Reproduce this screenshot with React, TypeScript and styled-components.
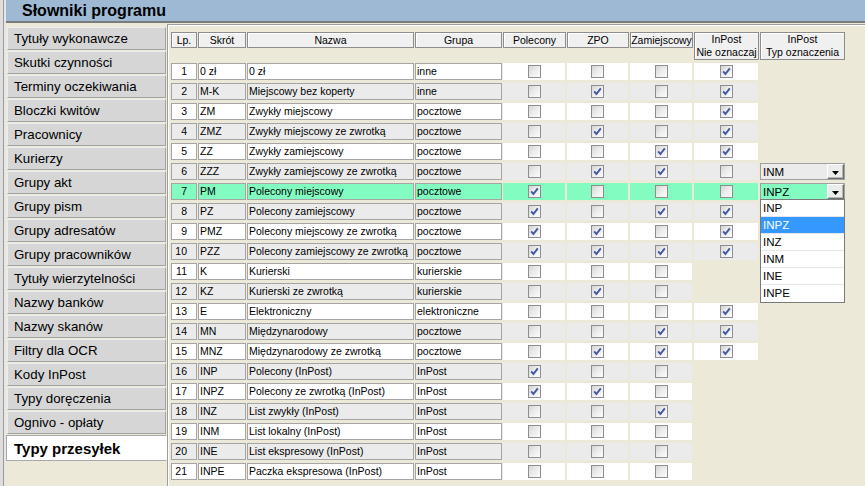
import React from 'react';
import styled, { createGlobalStyle } from 'styled-components';

const GlobalStyle = createGlobalStyle`
  html, body {
    margin: 0;
    padding: 0;
    background: #ece9d8;
  }

  body {
    font-family: "Liberation Sans", Arial, sans-serif;
  }
`;

type Tone = 'white' | 'gray' | 'green';

const toneBg: Record<Tone, string> = {
  white: '#ffffff',
  gray: '#ebebeb',
  green: '#82fcc0'
};

interface Row {
  lp: number;
  code: string;
  name: string;
  group: string;
  p: boolean;
  z: boolean;
  m: boolean;
  // undefined -> no "Nie oznaczaj" field in that row
  nie?: boolean;
  typ?: string;
  open?: boolean;
}

const ROWS: Row[] = [
  { lp: 1, code: '0 zł', name: '0 zł', group: 'inne', p: false, z: false, m: false, nie: true },
  { lp: 2, code: 'M-K', name: 'Miejscowy bez koperty', group: 'inne', p: false, z: true, m: false, nie: true },
  { lp: 3, code: 'ZM', name: 'Zwykły miejscowy', group: 'pocztowe', p: false, z: false, m: false, nie: true },
  { lp: 4, code: 'ZMZ', name: 'Zwykły miejscowy ze zwrotką', group: 'pocztowe', p: false, z: true, m: false, nie: true },
  { lp: 5, code: 'ZZ', name: 'Zwykły zamiejscowy', group: 'pocztowe', p: false, z: false, m: true, nie: true },
  { lp: 6, code: 'ZZZ', name: 'Zwykły zamiejscowy ze zwrotką', group: 'pocztowe', p: false, z: true, m: true, nie: false, typ: 'INM' },
  { lp: 7, code: 'PM', name: 'Polecony miejscowy', group: 'pocztowe', p: true, z: false, m: false, nie: false, typ: 'INPZ', open: true },
  { lp: 8, code: 'PZ', name: 'Polecony zamiejscowy', group: 'pocztowe', p: true, z: false, m: true, nie: true },
  { lp: 9, code: 'PMZ', name: 'Polecony miejscowy ze zwrotką', group: 'pocztowe', p: true, z: true, m: false, nie: true },
  { lp: 10, code: 'PZZ', name: 'Polecony zamiejscowy ze zwrotką', group: 'pocztowe', p: true, z: true, m: true, nie: true },
  { lp: 11, code: 'K', name: 'Kurierski', group: 'kurierskie', p: false, z: false, m: false },
  { lp: 12, code: 'KZ', name: 'Kurierski ze zwrotką', group: 'kurierskie', p: false, z: true, m: false },
  { lp: 13, code: 'E', name: 'Elektroniczny', group: 'elektroniczne', p: false, z: false, m: false, nie: true },
  { lp: 14, code: 'MN', name: 'Międzynarodowy', group: 'pocztowe', p: false, z: false, m: true, nie: true },
  { lp: 15, code: 'MNZ', name: 'Międzynarodowy ze zwrotką', group: 'pocztowe', p: false, z: true, m: true, nie: true },
  { lp: 16, code: 'INP', name: 'Polecony (InPost)', group: 'InPost', p: true, z: false, m: false },
  { lp: 17, code: 'INPZ', name: 'Polecony ze zwrotką (InPost)', group: 'InPost', p: true, z: true, m: false },
  { lp: 18, code: 'INZ', name: 'List zwykły (InPost)', group: 'InPost', p: false, z: false, m: true },
  { lp: 19, code: 'INM', name: 'List lokalny (InPost)', group: 'InPost', p: false, z: false, m: false },
  { lp: 20, code: 'INE', name: 'List ekspresowy (InPost)', group: 'InPost', p: false, z: false, m: false },
  { lp: 21, code: 'INPE', name: 'Paczka ekspresowa (InPost)', group: 'InPost', p: false, z: false, m: false }
];

const MENU = [
  'Tytuły wykonawcze',
  'Skutki czynności',
  'Terminy oczekiwania',
  'Bloczki kwitów',
  'Pracownicy',
  'Kurierzy',
  'Grupy akt',
  'Grupy pism',
  'Grupy adresatów',
  'Grupy pracowników',
  'Tytuły wierzytelności',
  'Nazwy banków',
  'Nazwy skanów',
  'Filtry dla OCR',
  'Kody InPost',
  'Typy doręczenia',
  'Ognivo - opłaty',
  'Typy przesyłek'
];

const TYP_OPTIONS = ['INP', 'INPZ', 'INZ', 'INM', 'INE', 'INPE'];

const Window = styled.div`
  display: flex;
  width: 865px;
  height: 486px;
  overflow: hidden;
  background: #ece9d8;
`;

const EdgeStrip = styled.div`
  flex: none;
  width: 6px;
  background: linear-gradient(to right, #dedede 0 3px, #9c9c9c 3px 4px, #e6e6e6 4px);
`;

const Main = styled.div`
  flex: 1;
  display: flex;
  flex-direction: column;
  min-width: 0;
`;

const TitleBar = styled.div`
  flex: none;
  height: 21px;
  display: flex;
  align-items: center;
  padding-left: 16px;
  background: #9db9d4;
  border-bottom: 2px solid #7b7b7b;
  color: #000;
  font: bold 16px "Liberation Sans", Arial, sans-serif;
`;

const Body = styled.div`
  flex: 1;
  display: flex;
  min-height: 0;
`;

const Sidebar = styled.nav`
  flex: none;
  width: 161px;
  display: flex;
  flex-direction: column;
  gap: 1px;
  padding-top: 4px;
`;

const NavButton = styled.div<{ $active?: boolean }>`
  box-sizing: border-box;
  height: ${(p) => (p.$active ? '26px' : '23px')};
  margin: 0 ${(p) => (p.$active ? '0' : '1px')};
  padding-left: ${(p) => (p.$active ? '7px' : '6px')};
  display: flex;
  align-items: center;
  background: ${(p) => (p.$active ? '#ffffff' : '#d6d6d6')};
  border: 1px solid;
  border-color: ${(p) => (p.$active ? '#a8a8a8 transparent #a8a8a8 #a8a8a8' : '#ededed #a3a3a3 #a3a3a3 #ededed')};
  color: #000;
  font-size: ${(p) => (p.$active ? '15px' : '13.3px')};
  font-weight: ${(p) => (p.$active ? 'bold' : 'normal')};
  white-space: nowrap;
`;

const Content = styled.section`
  flex: 1;
  position: relative;
  margin-top: 1px;
  padding: 7px 0 0 3px;
  border-top: 1px solid #9d9d9d;
  border-left: 1px solid #9d9d9d;
  box-shadow: inset 1px 1px 0 #ffffff;
`;

const Grid = styled.div`
  display: grid;
  grid-template-columns: 27px 49px 168px 88px 64px 63px 64px 66px 86px;
  grid-template-rows: 28px;
  grid-auto-rows: 17px;
  row-gap: 3px;
  font-size: 10.5px;
  color: #000;
`;

const HeaderCell = styled.div<{ $tall?: boolean }>`
  box-sizing: border-box;
  width: calc(100% - 1px);
  height: ${(p) => (p.$tall ? '28px' : '16px')};
  display: flex;
  flex-direction: column;
  align-items: center;
  justify-content: center;
  line-height: 13px;
  background: #f0f0f0;
  border: 1px solid #8d8d8d;
  box-shadow: inset 1px 1px 0 #ffffff;
  white-space: nowrap;
`;

const TextCell = styled.div<{ $tone: Tone; $num?: boolean }>`
  box-sizing: border-box;
  width: calc(100% - 1px);
  height: 17px;
  padding: ${(p) => (p.$num ? '0 9px 0 0' : '0 0 0 1px')};
  text-align: ${(p) => (p.$num ? 'right' : 'left')};
  line-height: 15px;
  background: ${(p) => toneBg[p.$tone]};
  border: 1px solid #a5a5a5;
  white-space: nowrap;
  overflow: hidden;
`;

const CheckCell = styled.div<{ $tone: Tone }>`
  width: calc(100% - 2px);
  height: 17px;
  display: flex;
  align-items: center;
  justify-content: center;
  background: ${(p) => toneBg[p.$tone]};
`;

const Box = styled.span`
  box-sizing: border-box;
  width: 13px;
  height: 13px;
  display: flex;
  align-items: center;
  justify-content: center;
  border: 1px solid #8e8e8e;
  background: linear-gradient(135deg, #d4d4d4 0%, #ebebeb 45%, #fbfbfb 100%);
`;

const Combo = styled.div<{ $tone: Tone }>`
  position: relative;
  box-sizing: border-box;
  width: calc(100% - 1px);
  height: 17px;
  display: flex;
  align-items: center;
  padding-left: 2px;
  background: ${(p) => toneBg[p.$tone]};
  border: 1px solid #a0a0a0;
  font-size: 11.5px;
`;

const ComboButton = styled.span`
  position: absolute;
  right: 0;
  top: 0;
  box-sizing: border-box;
  width: 17px;
  height: 15px;
  display: flex;
  align-items: center;
  justify-content: center;
  padding-top: 2px;
  background: #ececec;
  border: 1px solid;
  border-color: #ffffff #6e6e6e #6e6e6e #ffffff;
  box-shadow: inset -1px -1px 0 #b5b5b5;
`;

const DropList = styled.ul`
  position: absolute;
  left: -1px;
  top: 100%;
  z-index: 2;
  box-sizing: border-box;
  width: 85px;
  margin: 0;
  padding: 0;
  list-style: none;
  background: #ffffff;
  border: 1px solid #7a7a7a;
`;

const DropItem = styled.li<{ $selected?: boolean }>`
  box-sizing: border-box;
  height: 17px;
  padding-left: 2px;
  line-height: 16px;
  font-size: 11.5px;
  color: ${(p) => (p.$selected ? '#ffffff' : '#000000')};
  background: ${(p) => (p.$selected ? '#3399ff' : '#ffffff')};
  border-bottom: 1px solid #e6e6e6;

  &:last-child {
    border-bottom: none;
  }
`;

const Check: React.FC<{ on: boolean }> = ({ on }) => (
  <Box>
    {on && (
      <svg width='9' height='9' viewBox='0 0 9 9'>
        <path d='M1.2 4.4 L3.4 7 L7.8 1.4' fill='none' stroke='#3f57a2' strokeWidth='1.9' />
      </svg>
    )}
  </Box>
);

const Arrow = () => (
  <svg width='7' height='4' viewBox='0 0 7 4'>
    <path d='M0 0 H7 L3.5 4 Z' fill='#000' />
  </svg>
);

function toneOf (row: Row): Tone {
  if (row.open) return 'green';

  return row.lp % 2 === 1 ? 'white' : 'gray';
}

export default function App () {
  return (
    <>
      <GlobalStyle />
      <Window>
        <EdgeStrip />
        <Main>
          <TitleBar>Słowniki programu</TitleBar>
          <Body>
            <Sidebar>
              {MENU.map((label, i) => (
                <NavButton $active={i === MENU.length - 1} key={label}>
                  {label}
                </NavButton>
              ))}
            </Sidebar>
            <Content>
              <Grid>
                <HeaderCell>Lp.</HeaderCell>
                <HeaderCell>Skrót</HeaderCell>
                <HeaderCell>Nazwa</HeaderCell>
                <HeaderCell>Grupa</HeaderCell>
                <HeaderCell>Polecony</HeaderCell>
                <HeaderCell>ZPO</HeaderCell>
                <HeaderCell>Zamiejscowy</HeaderCell>
                <HeaderCell $tall>
                  <span>InPost</span>
                  <span>Nie oznaczaj</span>
                </HeaderCell>
                <HeaderCell $tall>
                  <span>InPost</span>
                  <span>Typ oznaczenia</span>
                </HeaderCell>

                {ROWS.map((row) => {
                  const tone = toneOf(row);

                  return (
                    <React.Fragment key={row.lp}>
                      <TextCell $num $tone={tone}>{row.lp}</TextCell>
                      <TextCell $tone={tone}>{row.code}</TextCell>
                      <TextCell $tone={tone}>{row.name}</TextCell>
                      <TextCell $tone={tone}>{row.group}</TextCell>
                      <CheckCell $tone={tone}><Check on={row.p} /></CheckCell>
                      <CheckCell $tone={tone}><Check on={row.z} /></CheckCell>
                      <CheckCell $tone={tone}><Check on={row.m} /></CheckCell>
                      {row.nie === undefined
                        ? <div />
                        : <CheckCell $tone={tone}><Check on={row.nie} /></CheckCell>}
                      {row.typ
                        ? (
                          <Combo $tone={tone}>
                            {row.typ}
                            <ComboButton><Arrow /></ComboButton>
                            {row.open && (
                              <DropList>
                                {TYP_OPTIONS.map((opt) => (
                                  <DropItem $selected={opt === row.typ} key={opt}>{opt}</DropItem>
                                ))}
                              </DropList>
                            )}
                          </Combo>
                        )
                        : <div />}
                    </React.Fragment>
                  );
                })}
              </Grid>
            </Content>
          </Body>
        </Main>
      </Window>
    </>
  );
}
